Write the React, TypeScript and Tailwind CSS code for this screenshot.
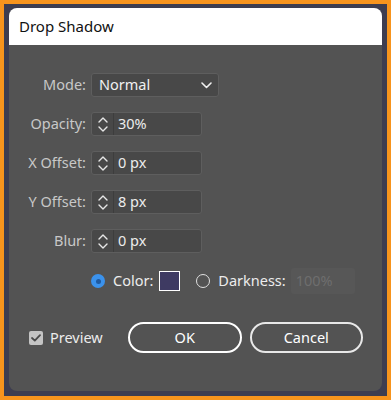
import React from "react";

const font = { fontFamily: '"Noto Sans", "Open Sans", sans-serif' };

function Stepper() {
  return (
    <div className="flex h-full w-[22px] flex-col items-center justify-center gap-[3px] border-r border-[#3d3d3d]">
      <svg width="10" height="6" viewBox="0 0 10 6" fill="none">
        <path d="M1 5 L5 1 L9 5" stroke="#e6e6e6" strokeWidth="1.4" strokeLinecap="round" strokeLinejoin="round" />
      </svg>
      <svg width="10" height="6" viewBox="0 0 10 6" fill="none">
        <path d="M1 1 L5 5 L9 1" stroke="#e6e6e6" strokeWidth="1.4" strokeLinecap="round" strokeLinejoin="round" />
      </svg>
    </div>
  );
}

function NumRow({ label, value }: { label: string; value: string }) {
  return (
    <div className="flex h-[24px] items-center">
      <div className="w-[82px] pr-[5px] text-right text-[14.5px] text-[#c8c8c8]">{label}</div>
      <div className="flex h-[24px] w-[111px] items-center rounded-[3px] border border-[#5e5e5e] bg-[#484848]">
        <Stepper />
        <span className="pl-[4px] text-[14.5px] text-[#ececec]">{value}</span>
      </div>
    </div>
  );
}

export default function App() {
  return (
    <div className="h-[400px] w-[391px] bg-[#f7941d] p-[4px]" style={font}>
      <div className="flex h-[392px] w-[383px] bg-[#3d3d50] pl-[5px] pt-[4px]">
        <div className="flex h-[383px] w-[373px] flex-col overflow-hidden rounded-[8px] bg-[#535353]">
          <div className="flex h-[37px] items-center bg-white pl-[10px] text-[15px] text-[#111]">Drop Shadow</div>
          <div className="flex flex-col gap-[15px] pt-[28px]">
            <div className="flex h-[24px] items-center">
              <div className="w-[82px] pr-[5px] text-right text-[14.5px] text-[#c8c8c8]">Mode:</div>
              <div className="flex h-[24px] w-[128px] items-center justify-between rounded-[3px] border border-[#5e5e5e] bg-[#484848] pl-[7px] pr-[6px]">
                <span className="text-[14.5px] text-[#f0f0f0]">Normal</span>
                <svg width="11" height="7" viewBox="0 0 11 7" fill="none">
                  <path d="M1 1 L5.5 5.5 L10 1" stroke="#f0f0f0" strokeWidth="1.6" strokeLinecap="round" strokeLinejoin="round" />
                </svg>
              </div>
            </div>
            <NumRow label="Opacity:" value="30%" />
            <NumRow label="X Offset:" value="0 px" />
            <NumRow label="Y Offset:" value="8 px" />
            <NumRow label="Blur:" value="0 px" />
          </div>
          <div className="mt-[15px] flex h-[26px] items-center pl-[82px]">
            <div className="flex h-[14px] w-[14px] items-center justify-center rounded-full bg-[#3b92ec]">
              <div className="h-[5px] w-[5px] rounded-full bg-[#1f5aa0]" />
            </div>
            <span className="ml-[8px] text-[14.5px] text-[#ececec]">Color:</span>
            <div className="ml-[6px] h-[20px] w-[21px] border-[1.5px] border-white bg-[#3e3a62]" />
            <div className="ml-[16px] h-[14px] w-[14px] rounded-full border-[1.5px] border-[#e0e0e0]" />
            <span className="ml-[8px] text-[14.5px] text-[#ececec]">Darkness:</span>
            <div className="ml-[5px] flex h-[26px] w-[64px] items-center rounded-[3px] bg-[#575757] pl-[5px] text-[14.5px] text-[#6e6e6e]">100%</div>
          </div>
          <div className="mt-[28px] flex h-[31px] items-center pl-[20px]">
            <div className="flex h-[14px] w-[14px] items-center justify-center rounded-[2px] bg-[#c4c4c4]">
              <svg width="10" height="8" viewBox="0 0 10 8" fill="none">
                <path d="M1 4 L3.8 6.6 L9 1.2" stroke="#4a4a4a" strokeWidth="1.8" strokeLinecap="round" strokeLinejoin="round" />
              </svg>
            </div>
            <span className="ml-[7px] text-[14.5px] text-[#ececec]">Preview</span>
            <div className="ml-[25px] flex h-[31px] w-[114px] items-center justify-center rounded-full border-2 border-white text-[14.5px] text-white">OK</div>
            <div className="ml-[8px] flex h-[31px] w-[113px] items-center justify-center rounded-full border-2 border-[#e8e8e8] text-[14.5px] text-white">Cancel</div>
          </div>
        </div>
      </div>
    </div>
  );
}
